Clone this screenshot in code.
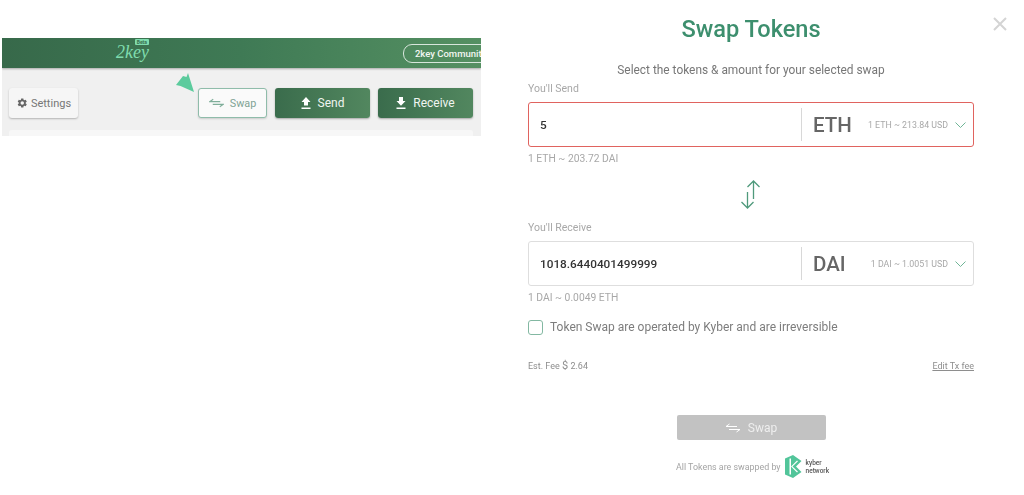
<template>
  <div class="page">
    <section class="shot">
      <header class="topbar">
        <div class="logo">
          <span class="beta">Beta</span>
          <span class="logo-text">2key</span>
        </div>
        <div class="community">2key Community</div>
      </header>
      <div class="toolbar">
        <button class="tool settings">
          <svg class="gear" width="12" height="12" viewBox="0 0 24 24">
            <path fill="#666" d="M19.4 13a7.6 7.6 0 0 0 0-2l2.2-1.7-2.2-3.7-2.6 1a7.6 7.6 0 0 0-1.7-1L14.700 2.800h-4.400l-.4 2.800a7.600 7.600 0 0 0-1.700 1l-2.600-1-2.200 3.700L5.600 11a7.600 7.600 0 0 0 0 2l-2.200 1.700 2.200 3.700 2.600-1a7.600 7.600 0 0 0 1.700 1l.4 2.800h4.400l.4-2.800a7.600 7.600 0 0 0 1.700-1l2.600 1 2.200-3.700zM12.500 15.500a3.500 3.500 0 1 1 0-7 3.500 3.500 0 0 1 0 7z" />
          </svg>
          Settings
        </button>
        <div class="spacer"></div>
        <div class="swap-wrap">
          <svg class="pointer" width="20" height="20" viewBox="0 0 20 20">
            <path fill="#5ccb9d" d="M18 19 12 0 10.500 4 7 3 0 12 4.500 13z" />
          </svg>
          <button class="tool swap">
            <svg width="15" height="10" viewBox="0 0 16 10" fill="none" stroke="#7fae9a" stroke-width="1.200">
              <path d="M4.500 1 1 3.500h11M11.500 9 15 6.500H4" />
            </svg>
            Swap
          </button>
        </div>
        <button class="tool solid send">
          <svg width="10" height="12" viewBox="0 0 10 12" fill="#fff">
            <path d="M5 0 9.500 5H7v3.500H3V5H.5zM.5 10.500h9V12h-9z" />
          </svg>
          Send
        </button>
        <button class="tool solid receive">
          <svg width="10" height="12" viewBox="0 0 10 12" fill="#fff">
            <path d="M3 0h4v4h2.500L5 8.800.5 4H3zM.5 10.500h9V12h-9z" />
          </svg>
          Receive
        </button>
      </div>
      <div class="card-top"></div>
    </section>

    <section class="modal">
      <svg class="close" width="16" height="16" viewBox="0 0 16 16" stroke="#d4d4d4" stroke-width="2">
        <path d="M2 2l12 12M14 2 2 14" />
      </svg>
      <h1 class="title">Swap Tokens</h1>
      <p class="subtitle">Select the tokens &amp; amount for your selected swap</p>

      <div class="field-label">You'll Send</div>
      <div class="token-box error">
        <div class="amount">5</div>
        <div class="token">
          <span class="symbol">ETH</span>
          <span class="rate">1 ETH ~ 213.84 USD</span>
          <svg class="chevron" width="11" height="6" viewBox="0 0 11 6" fill="none" stroke="#6fb596">
            <path d="M.5.500 5.500 5.500l5-5" />
          </svg>
        </div>
      </div>
      <div class="hint">1 ETH ~ 203.72 DAI</div>

      <div class="flip">
        <svg width="20" height="29" viewBox="0 0 20 29" fill="none" stroke="#4f9a7c" stroke-width="1.300">
          <path d="M12.500 1v18M6.500 7l6-6 6 6M6.500 12v16M.5 22l6 6 6-6" />
        </svg>
      </div>

      <div class="field-label receive-label">You'll Receive</div>
      <div class="token-box">
        <div class="amount">1018.6440401499999</div>
        <div class="token">
          <span class="symbol">DAI</span>
          <span class="rate">1 DAI ~ 1.0051 USD</span>
          <svg class="chevron" width="11" height="6" viewBox="0 0 11 6" fill="none" stroke="#6fb596">
            <path d="M.5.500 5.500 5.500l5-5" />
          </svg>
        </div>
      </div>
      <div class="hint">1 DAI ~ 0.0049 ETH</div>

      <label class="agree">
        <span class="check"></span>
        Token Swap are operated by Kyber and are irreversible
      </label>

      <div class="fee-row">
        <span>Est. Fee <span class="dollar">$</span> 2.64</span>
        <a class="edit">Edit Tx fee</a>
      </div>

      <button class="swap-btn">
        <svg width="16" height="10" viewBox="0 0 16 10" fill="none" stroke="#fff" stroke-width="1">
          <path d="M4.500 1 1 3.500h11M11.500 9 15 6.500H4" />
        </svg>
        Swap
      </button>

      <div class="powered">
        <span>All Tokens are swapped by</span>
        <svg class="kyber" width="17" height="23" viewBox="0 0 17 23">
          <path fill="#52c59a" d="M0 3.500 8 0l8.500 6-5.500 5.500L16.500 17 8 23l-8-3.500z" />
          <path fill="#fff" d="M4.500 3.500h1.500v16H4.500zM6 11.500 12 5.500l1 .8-5.500 5.200L13 16.700l-1 .8z" />
        </svg>
        <span class="kyber-name">kyber<br />network</span>
      </div>
    </section>
  </div>
</template>

<style>
body {
  background: #fff;
}
</style>

<style scoped>
.page {
  display: flex;
  width: 1024px;
  height: 495px;
  overflow: hidden;
  font-family: Roboto, "Liberation Sans", sans-serif;
  filter: blur(0.45px);
}

.shot {
  width: 479px;
  height: 98px;
  margin: 38px 0 0 2px;
  background: #f0f0f0;
  overflow: hidden;
  flex: none;
}

.topbar {
  height: 30px;
  display: flex;
  align-items: center;
  background: linear-gradient(90deg, #37694a 0%, #3f7a55 50%, #559062 100%);
  box-shadow: 0 1px 2px rgba(0, 0, 0, 0.3);
  position: relative;
}

.logo {
  display: flex;
  flex-direction: column;
  align-self: flex-start;
  margin: 1px 0 0 114px;
  width: 35px;
}

.logo-text {
  font-family: "Liberation Serif", serif;
  font-style: italic;
  font-size: 18px;
  line-height: 14px;
  color: #7fdcae;
}

.beta {
  align-self: flex-end;
  background: #7fdcae;
  color: #3b7150;
  font-size: 5px;
  font-weight: 700;
  line-height: 6px;
  padding: 0 2px;
  border-radius: 1px;
}

.community {
  margin-left: 254px;
  flex: none;
  width: 100px;
  height: 17px;
  border: 1px solid #d8e6dc;
  border-radius: 9px;
  font-size: 9.500px;
  font-weight: 500;
  line-height: 17px;
  padding-left: 11px;
  color: #f2f6f2;
  white-space: nowrap;
  box-sizing: content-box;
}

.toolbar {
  display: flex;
  align-items: flex-start;
  padding: 20px 8px 0 7px;
  height: 42px;
}

.spacer {
  flex: 1;
}

.tool {
  display: flex;
  align-items: center;
  justify-content: center;
  gap: 7px;
  height: 30px;
  border: none;
  border-radius: 3px;
  font-family: inherit;
  font-size: 11px;
  padding: 0;
  box-sizing: border-box;
}

.settings {
  width: 69px;
  gap: 3px;
  background: #f6f6f6;
  color: #777;
  box-shadow: 0 1px 2px rgba(0, 0, 0, 0.25);
}

.swap-wrap {
  position: relative;
  margin-right: 8px;
}

.pointer {
  position: absolute;
  top: -15px;
  left: -22px;
}

.swap {
  width: 69px;
  background: #fafafa;
  border: 1px solid #8fbcaa;
  color: #7fa394;
  font-size: 10.800px;
  gap: 6px;
  box-shadow: 0 1px 2px rgba(0, 0, 0, 0.15);
}

.solid {
  color: #f0f5f1;
  font-size: 12px;
  box-shadow: 0 1px 2px rgba(0, 0, 0, 0.3);
  background: linear-gradient(90deg, #3a6c4c, #52875f);
}

.send {
  width: 95px;
  margin-right: 8px;
}

.receive {
  width: 95px;
}

.card-top {
  margin: 0 8px 0 7px;
  height: 20px;
  background: #f7f7f7;
  border-radius: 3px 3px 0 0;
}

.modal {
  position: relative;
  margin-left: 47px;
  width: 446px;
  flex: none;
  color: #9a9a9a;
}

.close {
  position: absolute;
  top: 16px;
  left: 464px;
}

.title {
  margin: 14px 0 0;
  font-size: 23.600px;
  font-weight: 500;
  line-height: 30px;
  text-align: center;
  color: #3d8f6e;
}

.subtitle {
  margin: 19px 0 0;
  font-size: 11.900px;
  line-height: 14px;
  text-align: center;
  color: #777;
}

.field-label {
  margin-top: 6px;
  font-size: 10.500px;
  line-height: 12px;
  color: #a8a8a8;
}

.receive-label {
  margin-top: 13px;
}

.token-box {
  display: flex;
  align-items: center;
  height: 45px;
  margin-top: 7px;
  border: 1px solid #dedede;
  border-radius: 3px;
  box-sizing: border-box;
  background: #fff;
}

.token-box.error {
  border-color: #e0635f;
}

.amount {
  flex: 1;
  padding-left: 11px;
  font-size: 11.800px;
  font-weight: 500;
  color: #333;
}

.token {
  display: flex;
  align-items: center;
  width: 172px;
  height: 33px;
  border-left: 1px solid #d8d8d8;
  box-sizing: border-box;
  padding: 0 7px 0 11px;
}

.symbol {
  font-size: 20.500px;
  font-weight: 500;
  color: #666;
}

.rate {
  margin-left: auto;
  font-size: 8.800px;
  color: #a8a8a8;
}

.chevron {
  margin-left: 7px;
}

.hint {
  margin-top: 6px;
  font-size: 10.300px;
  line-height: 12px;
  color: #a8a8a8;
}

.flip {
  display: flex;
  justify-content: center;
  margin-top: 15px;
}

.flip svg {
  display: block;
}

.agree {
  display: flex;
  align-items: center;
  gap: 7px;
  margin-top: 16px;
  font-size: 12px;
  line-height: 15px;
  color: #7d7d7d;
}

.check {
  width: 15px;
  height: 15px;
  border: 1px solid #83b8a2;
  border-radius: 3px;
  box-sizing: border-box;
}

.fee-row {
  display: flex;
  justify-content: space-between;
  margin-top: 25px;
  font-size: 9px;
  line-height: 12px;
  color: #8e8e8e;
}

.dollar {
  font-size: 11px;
}

.edit {
  text-decoration: underline;
}

.swap-btn {
  display: flex;
  align-items: center;
  justify-content: center;
  gap: 7px;
  width: 149px;
  height: 25px;
  margin: 43px auto 0;
  background: #c2c2c2;
  border: none;
  border-radius: 2px;
  color: #eee;
  font-family: inherit;
  font-size: 12px;
}

.powered {
  display: flex;
  align-items: center;
  justify-content: center;
  gap: 4px;
  margin: 15px 0 0 3px;
  font-size: 8.900px;
  color: #a4a4a4;
}

.kyber-name {
  font-size: 6.500px;
  line-height: 8px;
  font-weight: 500;
  color: #555;
}
</style>
